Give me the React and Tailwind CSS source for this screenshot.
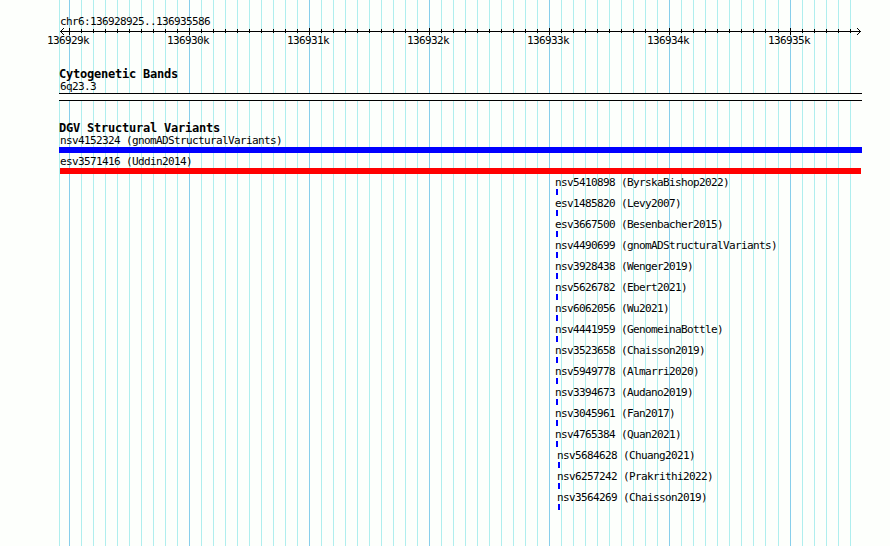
import React from "react";

const majorTicks = [
  { x: 69, label: "136929k" },
  { x: 189, label: "136930k" },
  { x: 309, label: "136931k" },
  { x: 429, label: "136932k" },
  { x: 549, label: "136933k" },
  { x: 669, label: "136934k" },
  { x: 790, label: "136935k" },
];

// minor ticks sit 12px apart, with one pixel of rounding after 765
const minorTicks = [];
for (let i = 1; i <= 65; i++) {
  const x = 69 + i * 12 + (i > 58 ? 1 : 0);
  if (i % 10 !== 0) minorTicks.push(x);
}

const variants = [
  { name: "nsv5410898 (ByrskaBishop2022)" },
  { name: "esv1485820 (Levy2007)" },
  { name: "esv3667500 (Besenbacher2015)" },
  { name: "nsv4490699 (gnomADStructuralVariants)" },
  { name: "nsv3928438 (Wenger2019)" },
  { name: "nsv5626782 (Ebert2021)" },
  { name: "nsv6062056 (Wu2021)" },
  { name: "nsv4441959 (GenomeinaBottle)" },
  { name: "nsv3523658 (Chaisson2019)" },
  { name: "nsv5949778 (Almarri2020)" },
  { name: "nsv3394673 (Audano2019)" },
  { name: "nsv3045961 (Fan2017)" },
  { name: "nsv4765384 (Quan2021)" },
  { name: "nsv5684628 (Chuang2021)", shifted: true },
  { name: "nsv6257242 (Prakrithi2022)", shifted: true },
  { name: "nsv3564269 (Chaisson2019)", shifted: true },
];

const Label = ({ children, className = "" }) => (
  <div
    className={`h-[13px] text-[11px] leading-[13px] tracking-[-0.622px] whitespace-pre ${className}`}
  >
    {children}
  </div>
);

const Heading = ({ children }) => (
  <h2 className="ml-[59px] h-3 text-[12px] leading-3 font-bold tracking-[-0.225px] whitespace-pre">
    {children}
  </h2>
);

const GridLines = () => (
  <svg
    className="absolute inset-0"
    width="890"
    height="546"
    shapeRendering="crispEdges"
  >
    {[59, ...minorTicks].map((x) => (
      <rect key={x} x={x} y="0" width="1" height="546" fill="#afeeee" />
    ))}
    {majorTicks.map(({ x }) => (
      <rect key={x} x={x} y="0" width="1" height="546" fill="#87ceeb" />
    ))}
  </svg>
);

const Ruler = () => (
  <svg
    className="block h-[7px] w-[890px]"
    viewBox="0 28 890 7"
    shapeRendering="crispEdges"
  >
    <rect x="60" y="31" width="801" height="1" />
    {minorTicks.map((x) => (
      <rect key={x} x={x} y="29" width="1" height="4" />
    ))}
    {majorTicks.map(({ x }) => (
      <rect key={x} x={x} y="28" width="1" height="7" />
    ))}
    {/* arrow heads */}
    {[1, 2, 3].map((d) => (
      <g key={d}>
        <rect x={60 + d} y={31 - d} width="1" height="1" />
        <rect x={60 + d} y={31 + d} width="1" height="1" />
        <rect x={860 - d} y={31 - d} width="1" height="1" />
        <rect x={860 - d} y={31 + d} width="1" height="1" />
      </g>
    ))}
  </svg>
);

const App = () => {
  return (
    <div className="relative h-[546px] w-[890px] overflow-hidden bg-[#fdfffc] font-['DejaVu_Sans_Mono',monospace] text-black">
      <GridLines />

      <main className="relative flex flex-col">
        {/* Position */}
        <Label className="mt-[15px] ml-[60px]">chr6:136928925..136935586</Label>
        <Ruler />
        <div className="-mt-px ml-[47px] flex">
          {majorTicks.map(({ x, label }) => (
            <Label
              key={label}
              className={x === 669 ? "w-[121px]" : "w-[120px] last:w-[42px]"}
            >
              {label}
            </Label>
          ))}
        </div>

        {/* Cytogenetic bands */}
        <div className="mt-[21px]">
          <Heading>Cytogenetic Bands</Heading>
          <Label className="ml-[60px]">6q23.3</Label>
          <div className="ml-[59px] h-2 w-[803px] border-y border-black bg-[#fdfffc]" />
        </div>

        {/* Structural variants */}
        <div className="mt-[21px]">
          <Heading>DGV Structural Variants</Heading>
          <Label className="ml-[60px]">
            nsv4152324 (gnomADStructuralVariants)
          </Label>
          <div className="ml-[59px] h-1.5 w-[803px] bg-[#0000ff]" />
          <Label className="mt-0.5 ml-[60px]">esv3571416 (Uddin2014)</Label>
          <div className="ml-[60px] h-1.5 w-[801px] bg-[#ff0000]" />

          {variants.map(({ name, shifted }) => (
            <div
              key={name}
              className={`mt-0.5 ${shifted ? "ml-[557px]" : "ml-[555px]"}`}
            >
              <Label>{name}</Label>
              <div className="ml-px h-1.5 w-0.5 bg-[#0000ff]" />
            </div>
          ))}
        </div>
      </main>
    </div>
  );
};

export default App;
